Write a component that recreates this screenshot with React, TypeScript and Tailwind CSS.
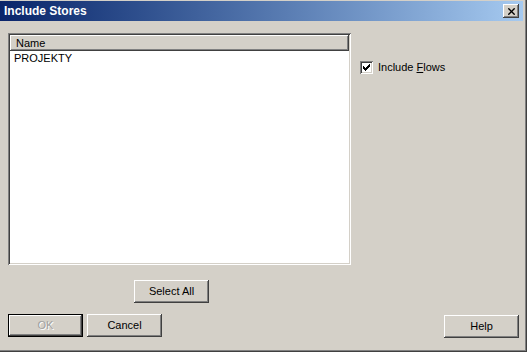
import { X } from 'lucide-react';

function Btn({ label, def, disabled, className = '' }: { label: string; def?: boolean; disabled?: boolean; className?: string }) {
  return (
    <div className={`h-[23px] w-[75px] ${def ? 'border border-black' : ''} ${className}`}>
      <div className="w-full h-full bg-[#d4d0c8] flex items-center justify-center shadow-[inset_-1px_-1px_#404040,inset_1px_1px_#ffffff,inset_-2px_-2px_#808080]">
        <span className={disabled ? 'text-[#a0a0a0] [text-shadow:1px_1px_#ffffff]' : 'text-black'}>{label}</span>
      </div>
    </div>
  );
}

export default function App() {
  return (
    <div
      className="w-[527px] h-[352px] bg-[#d4d0c8] flex flex-col text-[11px] text-black shadow-[inset_-1px_-1px_#404040,inset_-2px_-2px_#808080]"
      style={{ fontFamily: '"Liberation Sans", Arial, sans-serif' }}
    >
      {/* Title bar */}
      <div className="mt-[1px] mr-[4px] h-[20px] bg-gradient-to-r from-[#0a246a] to-[#a6caf0] flex items-center justify-between pl-[4px] pr-[4px]">
        <span className="text-white font-bold text-[12px] leading-none">Include Stores</span>
        <div className="w-[16px] h-[14px] bg-[#d4d0c8] flex items-center justify-center shadow-[inset_-1px_-1px_#404040,inset_1px_1px_#ffffff,inset_-2px_-2px_#808080]">
          <X size={11} strokeWidth={3} className="text-black" />
        </div>
      </div>

      {/* Body */}
      <div className="flex-1 flex flex-col pl-[8px] pr-[8px] pt-[12px]">
        <div className="flex">
          {/* List */}
          <div className="w-[343px] h-[232px] bg-white p-[2px] shadow-[inset_1px_1px_#808080,inset_-1px_-1px_#ffffff,inset_2px_2px_#404040,inset_-2px_-2px_#d4d0c8] flex flex-col">
            <div className="h-[16px] bg-[#d4d0c8] flex items-center pl-[6px] shadow-[inset_-1px_-1px_#404040,inset_1px_1px_#ffffff,inset_-2px_-2px_#808080]">
              <span>Name</span>
            </div>
            <div className="pl-[4px] pt-[1px] leading-[13px]">PROJEKTY</div>
          </div>

          {/* Options */}
          <div className="ml-[9px] pt-[26px]">
            <label className="flex items-center gap-[5px]">
              <div className="w-[13px] h-[13px] bg-white flex items-center justify-center shadow-[inset_1px_1px_#808080,inset_-1px_-1px_#ffffff,inset_2px_2px_#404040,inset_-2px_-2px_#d4d0c8]">
                <svg width="7" height="7" viewBox="0 0 7 7">
                  <path d="M0 2h1v1h1v1h1v-1h1v-1h1v-1h1v-1h1v3h-1v1h-1v1h-1v1h-1v1h-1v-1h-1v-1h-1z" fill="#000" />
                </svg>
              </div>
              <span>
                Include <span className="underline">F</span>lows
              </span>
            </label>
          </div>
        </div>

        <div className="flex pt-[15px] pl-[126px]">
          <Btn label="Select All" />
        </div>

        <div className="flex pt-[11px] items-start">
          <Btn label="OK" def disabled />
          <Btn label="Cancel" className="ml-[4px]" />
          <Btn label="Help" className="ml-auto mr-[0px] mt-[1px]" />
        </div>
      </div>
    </div>
  );
}
